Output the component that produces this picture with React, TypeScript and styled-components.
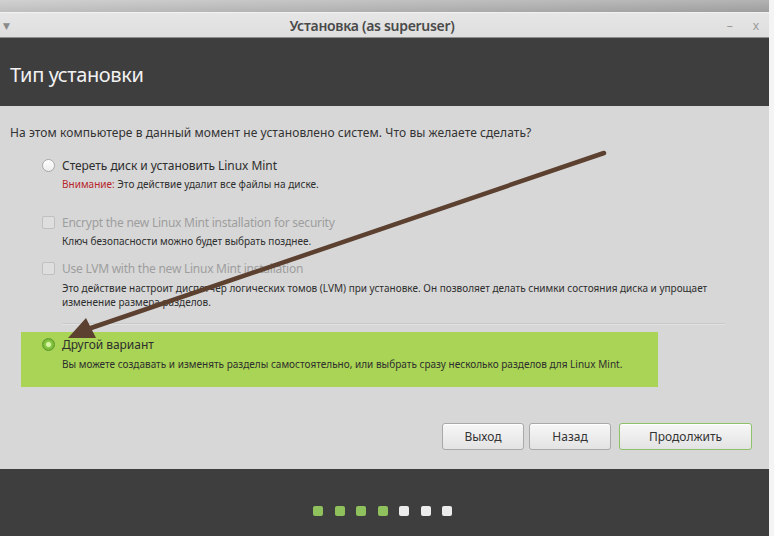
import React from "react";
import styled, { createGlobalStyle } from "styled-components";

const Global = createGlobalStyle`
  html, body { margin: 0; padding: 0; background: #f3f3f3; }
  body { font-family: "Noto Sans", "DejaVu Sans", sans-serif; }
  * { box-sizing: border-box; }
`;

const Page = styled.div`
  position: relative;
  width: 774px;
  height: 536px;
  display: flex;
  background: #f4f4f4;
  overflow: hidden;
`;

const Column = styled.div`
  width: 769px;
  display: flex;
  flex-direction: column;
`;

const DesktopStrip = styled.div`
  height: 13px;
  background: linear-gradient(to bottom, rgba(255,255,255,0.15), rgba(0,0,0,0.05)),
    linear-gradient(to right, #c9c9c9, #b4b4b4 60%, #a6a6a6);
  border-bottom: 1px solid #f2f2f2;
`;

const TitleBar = styled.div`
  height: 25px;
  display: flex;
  align-items: center;
  padding: 0 10px 0 3px;
  background: linear-gradient(to bottom, #e6e6e6, #dedede);
  border-bottom: 1px solid #8e8e8e;
  color: #555;
`;

const MenuArrow = styled.span`
  font-size: 9px;
  color: #8a8a8a;
  width: 44px;
`;

const WindowTitle = styled.div`
  flex: 1;
  text-align: center;
  font-size: 14px;
  font-weight: 600;
  color: #4a4a4a;
  letter-spacing: -0.3px;
  padding-right: 18px;
`;

const WinButtons = styled.div`
  width: 44px;
  display: flex;
  justify-content: flex-end;
  gap: 20px;
  font-size: 12px;
  color: #9a9a9a;
`;

const Header = styled.div`
  height: 68px;
  background: #3e3e3e;
  padding: 23px 10px 0;
`;

const HeaderTitle = styled.h1`
  margin: 0;
  font-size: 20px;
  line-height: 28px;
  font-weight: 400;
  color: #f2f2f2;
  letter-spacing: -0.4px;
`;

const Content = styled.div`
  flex: 1;
  background: #d7d7d7;
  display: flex;
  flex-direction: column;
  padding: 18px 0 19px 0;
`;

const Question = styled.p`
  margin: 0 0 0 10px;
  font-size: 12px;
  line-height: 18px;
  color: #333;
  letter-spacing: 0.07px;
`;

const Option = styled.div<{ $top: number }>`
  margin-top: ${(p) => p.$top}px;
  padding-left: 42px;
  display: flex;
  flex-direction: column;
`;

const OptionRow = styled.div`
  display: flex;
  align-items: center;
  gap: 7px;
  height: 18px;
`;

const Radio = styled.span<{ $checked?: boolean }>`
  width: 13px;
  height: 13px;
  border-radius: 50%;
  flex: none;
  border: 1px solid ${(p) => (p.$checked ? "#5f9a2c" : "#a9a9a9")};
  background: ${(p) =>
    p.$checked
      ? "radial-gradient(circle, #d8f2a8 0 2px, #8ccd45 3px, #6fae35 6px)"
      : "linear-gradient(#ffffff, #ececec)"};
`;

const Check = styled.span`
  width: 13px;
  height: 13px;
  border-radius: 2px;
  flex: none;
  border: 1px solid #c0c0c0;
  background: #dedede;
`;

const Label = styled.span<{ $disabled?: boolean }>`
  font-size: 12px;
  color: ${(p) => (p.$disabled ? "#9e9e9e" : "#2e2e2e")};
  letter-spacing: ${(p) => (p.$disabled ? "-0.25px" : "-0.05px")};
  white-space: nowrap;
`;

const Desc = styled.div<{ $gap?: number }>`
  margin-top: ${(p) => p.$gap ?? 3}px;
  padding-left: 20px;
  font-size: 10px;
  line-height: 14px;
  color: #2e2e2e;
  letter-spacing: 0.01px;
  white-space: nowrap;
`;

const Warn = styled.span`
  color: #b8262b;
`;

const Separator = styled.div`
  margin: 14px 44px 0 62px;
  height: 2px;
  border-top: 1px solid #c9c9c9;
  border-bottom: 1px solid #e2e2e2;
`;

const Highlight = styled.div`
  margin: 7px 0 0 21px;
  width: 637px;
  height: 55px;
  background: #a9d455;
  padding: 3px 0 0 21px;
  display: flex;
  flex-direction: column;
`;

const Buttons = styled.div`
  margin-top: auto;
  display: flex;
  justify-content: flex-end;
  gap: 5px;
  padding-right: 17px;
`;

const Button = styled.button<{ $w: number; $primary?: boolean }>`
  width: ${(p) => p.$w}px;
  height: 27px;
  margin-left: ${(p) => (p.$primary ? 3 : 0)}px;
  border-radius: 3px;
  border: 1px solid ${(p) => (p.$primary ? "#8fc06a" : "#a9a9a9")};
  background: linear-gradient(to bottom, #f7f7f7, #e3e3e3);
  box-shadow: inset 0 1px 0 #ffffff;
  font-family: "Noto Sans", sans-serif;
  font-size: 12px;
  color: #333;
  padding: 0;
`;

const Footer = styled.div`
  height: 67px;
  background: #3e3e3e;
  display: flex;
  justify-content: center;
  align-items: flex-start;
  padding: 37px 4px 0 0;
  gap: 11.5px;
`;

const Dot = styled.span<{ $done?: boolean }>`
  width: 10px;
  height: 10px;
  border-radius: 2px;
  background: ${(p) => (p.$done ? "#8fc25c" : "#ececec")};
`;

const SideStrip = styled.div`
  width: 5px;
  background: #f4f4f4;
`;

const ArrowLayer = styled.svg`
  position: absolute;
  left: 0;
  top: 0;
  pointer-events: none;
`;

export default function App() {
  return (
    <>
      <Global />
      <Page>
        <Column>
          <DesktopStrip />
          <TitleBar>
            <MenuArrow>▼</MenuArrow>
            <WindowTitle>Установка (as superuser)</WindowTitle>
            <WinButtons>
              <span>–</span>
              <span>x</span>
            </WinButtons>
          </TitleBar>
          <Header>
            <HeaderTitle>Тип установки</HeaderTitle>
          </Header>
          <Content>
            <Question>
              На этом компьютере в данный момент не установлено систем. Что вы желаете сделать?
            </Question>
            <Option $top={14}>
              <OptionRow>
                <Radio />
                <Label>Стереть диск и установить Linux Mint</Label>
              </OptionRow>
              <Desc>
                <Warn>Внимание:</Warn> Это действие удалит все файлы на диске.
              </Desc>
            </Option>
            <Option $top={22}>
              <OptionRow>
                <Check />
                <Label $disabled>Encrypt the new Linux Mint installation for security</Label>
              </OptionRow>
              <Desc>Ключ безопасности можно будет выбрать позднее.</Desc>
            </Option>
            <Option $top={11}>
              <OptionRow>
                <Check />
                <Label $disabled>Use LVM with the new Linux Mint installation</Label>
              </OptionRow>
              <Desc $gap={4}>
                Это действие настроит диспетчер логических томов (LVM) при установке. Он позволяет делать снимки состояния диска и упрощает
                <br />
                изменение размера разделов.
              </Desc>
            </Option>
            <Separator />
            <Highlight>
              <OptionRow>
                <Radio $checked />
                <Label>Другой вариант</Label>
              </OptionRow>
              <Desc $gap={4}>
                Вы можете создавать и изменять разделы самостоятельно, или выбрать сразу несколько разделов для Linux Mint.
              </Desc>
            </Highlight>
            <Buttons>
              <Button $w={82}>Выход</Button>
              <Button $w={82}>Назад</Button>
              <Button $w={133} $primary>
                Продолжить
              </Button>
            </Buttons>
          </Content>
          <Footer>
            <Dot $done />
            <Dot $done />
            <Dot $done />
            <Dot $done />
            <Dot />
            <Dot />
            <Dot />
          </Footer>
        </Column>
        <SideStrip />
        <ArrowLayer width="774" height="536" viewBox="0 0 774 536">
          <line
            x1="604"
            y1="153"
            x2="88"
            y2="329"
            stroke="#5c4030"
            strokeWidth="4.5"
            strokeLinecap="round"
          />
          <polygon points="68,338 86,318 96,338" fill="#5c4030" />
        </ArrowLayer>
      </Page>
    </>
  );
}
